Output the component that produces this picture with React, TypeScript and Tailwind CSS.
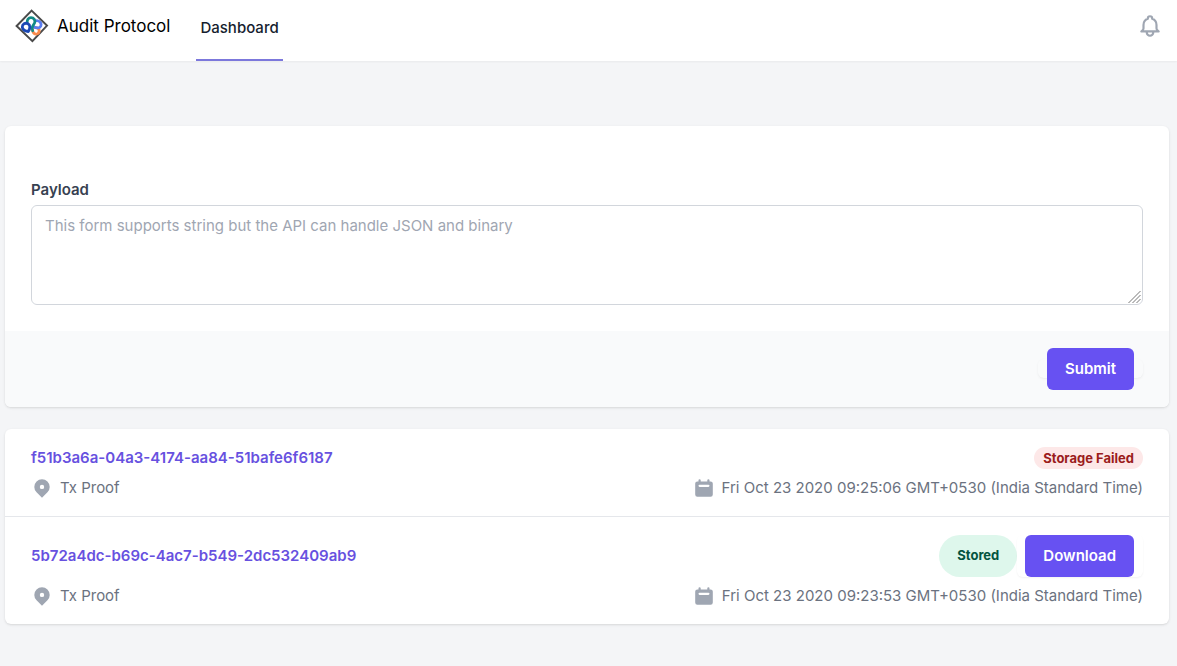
import { useState } from 'react';

interface Entry {
  id: string;
  stored: boolean;
  createdAt: string;
}

const ENTRIES: Entry[] = [
  {
    id: 'f51b3a6a-04a3-4174-aa84-51bafe6f6187',
    stored: false,
    createdAt: 'Fri Oct 23 2020 09:25:06 GMT+0530 (India Standard Time)',
  },
  {
    id: '5b72a4dc-b69c-4ac7-b549-2dc532409ab9',
    stored: true,
    createdAt: 'Fri Oct 23 2020 09:23:53 GMT+0530 (India Standard Time)',
  },
];

function Logo() {
  return (
    <svg className="size-[34px]" viewBox="0 0 34 34" fill="none">
      <path d="M16.6 1.6 32 16.600 17.400 32.200 1.600 17Z" stroke="#4a4a4a" strokeWidth="2" />
      <g strokeWidth="2.8" strokeLinejoin="round" strokeLinecap="round">
        <path d="M18.500 18.200l3.500.6c2.800.9 2.900 4.800.4 6c-2.700 1-4.500-1-4.900-3.800" stroke="#fa8a4b" />
        <path d="M20.500 11.800c1.500-.4 3.700.1 5 1.800c1.500 2.200.2 5.200-2.300 5.300c-1.900.1-3.700-.6-5.200-1.600" stroke="#5b7df0" />
        <path d="M12.200 13.500c-.4-2.800 1.300-4.800 3.800-4.800c2.900 0 4.700 2.700 3.600 5.200l-2.100 3.700c-.7 1.500-.3 2.900.2 4.200" stroke="#128a86" />
        <path d="M13.300 22.500c-3-.5-5.800-1.800-6-4.400c-.1-3 3-4.700 5.700-3.400c2.500 1.400 2.300 4.600.3 7.800Z" stroke="#1b48b5" />
      </g>
    </svg>
  );
}

function BellIcon() {
  return (
    <svg className="size-[26px]" viewBox="0 0 24 24" fill="none" stroke="currentColor" strokeWidth="2" strokeLinecap="round" strokeLinejoin="round">
      <path d="M15 17h5l-1.405-1.405A2.032 2.032 0 0118 14.158V11a6.002 6.002 0 00-4-5.659V5a2 2 0 10-4 0v.341C7.67 6.165 6 8.388 6 11v3.159c0 .538-.214 1.055-.595 1.436L4 17h5m6 0v1a3 3 0 11-6 0v-1m6 0H9" />
    </svg>
  );
}

function PinIcon() {
  return (
    <svg className="size-[22px] shrink-0 text-[#9fa6b2]" viewBox="0 0 20 20" fill="currentColor">
      <path fillRule="evenodd" clipRule="evenodd" d="M5.05 4.05a7 7 0 119.9 9.9L10 18.9l-4.95-4.95a7 7 0 010-9.9zM10 11a2 2 0 100-4 2 2 0 000 4z" />
    </svg>
  );
}

function CalendarIcon() {
  return (
    <svg className="size-[22px] shrink-0 text-[#9fa6b2]" viewBox="0 0 20 20" fill="currentColor">
      <path fillRule="evenodd" clipRule="evenodd" d="M6 2a1 1 0 00-1 1v1H4a2 2 0 00-2 2v10a2 2 0 002 2h12a2 2 0 002-2V6a2 2 0 00-2-2h-1V3a1 1 0 10-2 0v1H7V3a1 1 0 00-1-1zm0 5a1 1 0 000 2h8a1 1 0 100-2H6z" />
    </svg>
  );
}

function Header() {
  return (
    <header className="flex h-[61px] justify-between bg-white pl-[15px] pr-[14px] shadow-xs">
      <div className="flex">
        <div className="flex h-[52px] items-center gap-2">
          <Logo />
          <span className="pt-px text-[17px] text-black">Audit Protocol</span>
        </div>
        <nav className="ml-[26px] flex">
          <a href="#" className="flex items-center border-b-2 border-[#7c78dc] px-1 pb-[3px] text-[15px] font-medium text-[#161e2e]">
            Dashboard
          </a>
        </nav>
      </div>
      <button aria-label="Notifications" className="flex h-[52px] items-center text-[#9fa6b2]">
        <BellIcon />
      </button>
    </header>
  );
}

function PayloadForm() {
  const [payload, setPayload] = useState('');

  return (
    <form onSubmit={(e) => e.preventDefault()} className="overflow-hidden rounded-md bg-white shadow">
      <div className="px-[26px] pb-[26px] pt-[53px]">
        <label htmlFor="payload" className="block text-[15px] font-semibold leading-[22px] text-[#374151]">
          Payload
        </label>
        <div className="relative mt-1">
          <textarea
            id="payload"
            value={payload}
            onChange={(e) => setPayload(e.target.value)}
            placeholder="This form supports string but the API can handle JSON and binary"
            className="block h-[100px] w-full resize-none rounded-md border border-[#d2d6dc] px-[13px] py-[9px] text-[15px] leading-[22px] placeholder:text-[#9fa6b2]"
          />
          {/* corner grip */}
          <svg className="pointer-events-none absolute bottom-px right-px size-[14px]" viewBox="0 0 14 14" stroke="#777777" strokeWidth="1">
            <path d="M0.500 13 12.500 1M4.500 13 12.500 5M8.500 13 12.500 9" />
          </svg>
        </div>
      </div>
      <div className="bg-[#f9fafb] px-[26px] py-[17px] text-right text-[15px]">
        <span className="rounded-md px-[9px] shadow-sm shadow-black/5">
          <button className="h-[42px] rounded-md bg-[#6751f2] px-[18px] font-semibold text-white">Submit</button>
        </span>
      </div>
    </form>
  );
}

function EntryRow({ entry }: { entry: Entry }) {
  return (
    <li className="px-[26px] pb-[17px] pt-[18px]">
      <div className="flex items-center justify-between">
        <a href="#" className="text-[15px] font-semibold leading-[22px] text-[#6751e0]">
          {entry.id}
        </a>
        {entry.stored ? (
          <div className="flex">
            <span className="rounded-full bg-[#def7ec] px-[18px] text-[13px] font-bold leading-[40px] text-[#03543f]">
              Stored
            </span>
            <span className="rounded-md pl-2 pr-[9px] shadow-xs">
              <button className="block h-[42px] rounded-md bg-[#6751f2] px-[18px] text-[15px] font-semibold text-white">
                Download
              </button>
            </span>
          </div>
        ) : (
          <span className="rounded-full bg-[#fde8e8] px-[9px] text-[13px] font-bold leading-[22px] text-[#9b1c1c]">
            Storage Failed
          </span>
        )}
      </div>
      <div className="mt-2 flex justify-between text-[15px] leading-[22px] text-[#6b7280]">
        <div className="flex items-center gap-[7px]">
          <PinIcon />
          Tx Proof
        </div>
        <div className="flex items-center gap-[7px]">
          <CalendarIcon />
          {entry.createdAt}
        </div>
      </div>
    </li>
  );
}

export default function App() {
  return (
    <div className="min-h-screen bg-[#f4f5f7] font-['Inter','Liberation_Sans',sans-serif]">
      <Header />
      <main className="space-y-[22px] pb-10 pl-[5px] pr-2 pt-[65px]">
        <PayloadForm />
        <ul className="divide-y divide-[#e5e7eb] rounded-md bg-white shadow">
          {ENTRIES.map((entry) => (
            <EntryRow key={entry.id} entry={entry} />
          ))}
        </ul>
      </main>
    </div>
  );
}
